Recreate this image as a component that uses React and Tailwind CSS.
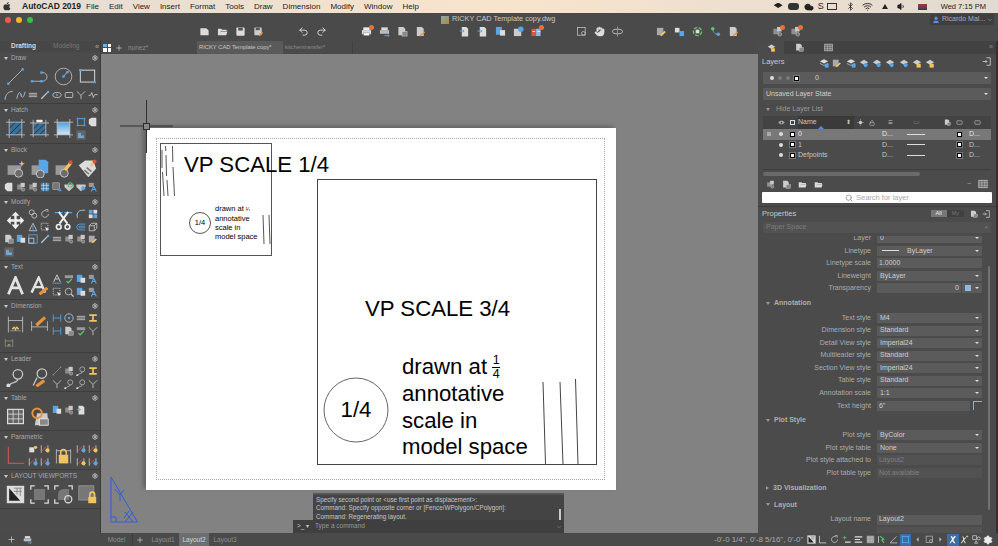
import { ChevronDown, Search, Hand, Undo2, Redo2, Plus, Settings, Wifi, Bluetooth, Cloud, Volume1, User, Lock } from "lucide-react";

const BLUE = "#58a6e8";
const ORANGE = "#e8923c";
const YELLOW = "#f2c55c";
const RED = "#e0523f";
const GREEN = "#5cc46a";
const G = "#c9c9c9";

// drawn at 24x24, the same art is used for big and small tool buttons
const art = {
  line: <><path d="M3 21 21 3" stroke={G} /><rect x="1.5" y="19.5" width="3" height="3" fill={BLUE} /><rect x="19.5" y="1.5" width="3" height="3" fill={BLUE} /></>,
  pline: <><path d="M2 18h14a5 5 0 0 0 0-11h-2" stroke={G} fill="none" /><rect x="1" y="16.5" width="3" height="3" fill={BLUE} /><rect x="13" y="16.5" width="3" height="3" fill={BLUE} /><rect x="13" y="5.5" width="3" height="3" fill={BLUE} /></>,
  circle: <><circle cx="12" cy="12" r="10.5" stroke={G} fill="none" /><path d="M12 12 17 6" stroke={G} /><rect x="10.5" y="10.5" width="3" height="3" fill={BLUE} /><rect x="15.5" y="5" width="3" height="3" fill={BLUE} /></>,
  rect: <><rect x="3" y="4" width="18" height="15" stroke={G} strokeWidth="1.4" fill="none" /><rect x="1.5" y="2.5" width="3" height="3" fill={BLUE} /><rect x="19.5" y="17.5" width="3" height="3" fill={BLUE} /></>,
  arc: <><path d="M3 21C4 10 10 4 21 3" stroke={G} strokeWidth="2" fill="none" /><rect x="1" y="19" width="4" height="4" fill={BLUE} /></>,
  spline: <><path d="M2 21C6 2 10 4 12 12s6 8 10-8" stroke={G} strokeWidth="2" fill="none" /><rect x="10" y="9" width="4" height="4" fill={BLUE} /></>,
  mline: <path d="M2 8h20M2 12h20M2 16h20" stroke={G} strokeWidth="2" />,
  pen: <><path d="M3 21 20 4" stroke={G} strokeWidth="3" /><rect x="17" y="2" width="5" height="5" fill={BLUE} /></>,
  ellipse: <><ellipse cx="12" cy="12" rx="10" ry="6" stroke={G} strokeWidth="2" fill="none" /><rect x="10" y="10" width="4" height="4" fill={BLUE} /></>,
  box: <rect x="3" y="6" width="18" height="12" rx="2" stroke={G} strokeWidth="2" fill="none" />,
  xline: <path d="M2 3 12 13 22 3M12 13v9" stroke={G} strokeWidth="2" fill="none" />,
  wave: <path d="M1 13h5l3-7 4 12 3-7h7" stroke={G} strokeWidth="2" fill="none" />,
  hatch: <><rect x="4" y="4" width="16" height="16" fill="#3d6f96" /><path d="M4 12l8-8M4 20 20 4M12 20l8-8" stroke="#222" strokeWidth="1" /><path d="M0 4h24M0 20h24M4 0v24M20 0v24" stroke={G} /></>,
  hatchEdit: <><rect x="4" y="5" width="16" height="15" fill="#3d6f96" /><path d="M4 13l8-8M4 20 20 5M12 20l8-8" stroke="#222" /><path d="M0 5h24M0 20h24M4 1v22M20 1v22" stroke={G} /><rect x="8" y="1" width="8" height="3" rx="1" fill="#eee" /></>,
  gradient: <><defs><linearGradient id="gr" x1="0" y1="0" x2="0" y2="1"><stop offset="0" stopColor="#4d9fe0" /><stop offset="1" stopColor="#d8e8f4" /></linearGradient></defs><rect x="4" y="4" width="16" height="16" fill="url(#gr)" /><path d="M0 4h24M0 20h24M4 0v24M20 0v24" stroke={G} /></>,
  boundary: <><rect x="4" y="4" width="16" height="16" stroke={BLUE} strokeWidth="2" fill="none" /><path d="M0 4h24M0 20h24M4 0v24M20 0v24" stroke={BLUE} /></>,
  tag: <path d="M2 6l6-4h12v20H8L2 16z" fill="#ddd" />,
  region: <><rect x="1" y="1" width="22" height="22" fill="#666" /><path d="M5 19V7h7v6h7v6z" fill="#6fa8d8" /></>,
  insert: <><rect x="2" y="8" width="17" height="12" fill="#9a9a9a" /><circle cx="16" cy="18" r="5" fill="#6b6b6b" stroke="#ddd" /><path d="M20 2l1 3 3 1-3 1-1 3-1-3-3-1 3-1z" fill={YELLOW} /></>,
  block: <><rect x="2" y="8" width="14" height="12" fill="#9a9a9a" /><path d="M11 1h9l3 3v14H11z" fill={BLUE} /><circle cx="13" cy="19" r="5" fill="#6b6b6b" stroke="#ddd" /></>,
  blockEdit: <><rect x="2" y="8" width="15" height="12" fill="#9a9a9a" /><circle cx="13" cy="18" r="5" fill="#6b6b6b" stroke="#ddd" /><path d="M14 14 21 5" stroke={YELLOW} strokeWidth="4" /><circle cx="21" cy="4" r="2.5" fill={RED} /></>,
  attr: <><path d="M1 8 9 2h10l4 10-10 11z" fill="#ddd" /><path d="M8 14l6 5M11 11l6 5" stroke="#777" strokeWidth="2" /><path d="M16 9l4-5" stroke={YELLOW} strokeWidth="3" /><circle cx="21" cy="3" r="2.5" fill={RED} /></>,
  sheet: <><rect x="3" y="6" width="12" height="12" fill="#8f8f8f" /><rect x="11" y="2" width="10" height="10" fill="#c8c8c8" /><circle cx="17" cy="18" r="4" fill="#777" stroke="#ddd" /></>,
  grid: <><rect x="2" y="2" width="20" height="20" fill="#3e7fb4" /><path d="M8 2v20M16 2v20M2 8h20M2 16h20" stroke="#e6e6e6" strokeWidth="1.5" /></>,
  boxArrow: <><rect x="2" y="2" width="16" height="16" fill="#777" stroke="#ddd" /><path d="M14 20h8M19 16l3 4-3 3" stroke={BLUE} strokeWidth="2" fill="none" /></>,
  shieldG: <><path d="M1 6h22v6l-11 10L1 12z" fill="#ccc" /><circle cx="15" cy="7" r="5" fill="none" stroke={GREEN} strokeWidth="2.5" /></>,
  shieldB: <><path d="M1 6h22v6l-11 10L1 12z" fill="#ccc" /><circle cx="17" cy="15" r="5" fill={BLUE} /></>,
  blockA: <><rect x="2" y="2" width="12" height="10" fill="#999" /><path d="M8 23l6-13 6 13M11 18h6" stroke={BLUE} strokeWidth="2.5" fill="none" /></>,
  move: <path d="M12 1l5 5h-3.5v4.5H18V7l5 5-5 5v-3.5h-4.5V17H17l-5 6-5-6h3.5v-3.5H6V17l-5-5 5-5v3.5h4.5V6H7z" fill="#eee" />,
  copy: <><circle cx="9" cy="8" r="6" stroke={G} strokeWidth="2" fill="none" /><circle cx="15" cy="16" r="6" stroke={G} strokeWidth="2" fill="none" /></>,
  rotate: <><path d="M20 12a8 8 0 1 1-4-7" stroke={G} strokeWidth="2" fill="none" /><path d="M13 1h6v6" stroke={G} strokeWidth="2" fill="none" /></>,
  mirror: <><path d="M12 3 3 21h18z" stroke={G} strokeWidth="2" fill="none" /><path d="M12 9v12" stroke={BLUE} strokeWidth="2" /></>,
  stretch: <><path d="M3 3h16v16H3z" stroke={G} strokeWidth="2" strokeDasharray="3 2" fill="none" /><path d="M12 12l10 5-4 2-1 4z" fill="#eee" /></>,
  trim: <><path d="M1 2h22" stroke={BLUE} strokeDasharray="4 2" strokeWidth="1.4" /><path d="M6 1l11 15M18 1 7 16" stroke="#eee" strokeWidth="2.5" /><circle cx="6" cy="20" r="3" stroke="#eee" strokeWidth="2" fill="none" /><circle cx="17" cy="20" r="3" stroke="#eee" strokeWidth="2" fill="none" /></>,
  fillet: <><path d="M3 22V14A11 11 0 0 1 14 3h8" stroke={G} strokeWidth="2" fill="none" /><rect x="1" y="12" width="4" height="4" fill={BLUE} /></>,
  array: <><rect x="2" y="2" width="9" height="9" fill={BLUE} /><rect x="13" y="2" width="9" height="9" fill="#ddd" /><rect x="2" y="13" width="9" height="9" fill="#ddd" /><rect x="13" y="13" width="9" height="9" fill={BLUE} /></>,
  offset: <path d="M22 5H9a7 7 0 0 0 0 14h13M22 10H9a2 2 0 0 0 0 4h13" stroke={BLUE} strokeWidth="2" fill="none" />,
  cube: <path d="M3 9h12v12H3zM3 9l6-6h12v12l-6 6M15 9l6-6" stroke={G} strokeWidth="2" fill="none" />,
  scale: <><rect x="2" y="2" width="20" height="20" stroke={BLUE} strokeWidth="2" fill="none" /><rect x="2" y="10" width="12" height="12" stroke={G} strokeWidth="2" fill="none" /></>,
  textA: <path d="M3 23 12 2l9 21M7 15h10" stroke="#e3e3e3" strokeWidth="3.5" fill="none" />,
  textPen: <><path d="M2 21 11 2l8 19M6 14h10" stroke="#e3e3e3" strokeWidth="3" fill="none" /><path d="M12 23l10-8" stroke={ORANGE} strokeWidth="4" /></>,
  smallA: <><path d="M4 19 12 2l8 17M8 12h8" stroke={G} strokeWidth="2.4" fill="none" /><path d="M1 22h22" stroke={BLUE} strokeWidth="2" /></>,
  abc: <><path d="M2 3h20v7H2z" fill="#999" /><path d="M6 17l4 4 9-9" stroke={GREEN} strokeWidth="3" fill="none" /></>,
  notes: <><rect x="2" y="2" width="13" height="17" fill={BLUE} /><rect x="11" y="9" width="11" height="12" fill="#ddd" /></>,
  find: <><circle cx="11" cy="11" r="8" stroke={G} strokeWidth="2" fill="none" /><path d="M17 17l6 6" stroke={G} strokeWidth="3" /></>,
  dimBig: <><path d="M3 2v20M21 2v20M3 7h18" stroke={G} /><path d="M8 18l3-3M16 18l-3-3M12 20v-4" stroke={YELLOW} strokeWidth="2" /><path d="M5 20h14" stroke="#999" /></>,
  dimPen: <><path d="M2 8v12M22 8v12M2 15h20" stroke={G} /><path d="M8 13l11-10" stroke={ORANGE} strokeWidth="4" /></>,
  dimS: <path d="M3 3v18M21 3v18M3 12h18" stroke={BLUE} strokeWidth="2" fill="none" />,
  radius: <><circle cx="12" cy="12" r="10" stroke={G} strokeWidth="2" fill="none" /><circle cx="12" cy="12" r="3" fill={BLUE} /></>,
  ibeam: <path d="M3 3h18v4h-7v10h7v4H3v-4h7V7H3z" fill={YELLOW} />,
  leader: <><circle cx="15" cy="8" r="6" stroke={G} strokeWidth="1.6" fill="none" /><path d="M15 14C14 20 8 16 4 22" stroke={G} strokeWidth="1.6" fill="none" /><circle cx="3" cy="22" r="2.5" fill="#ddd" /></>,
  leaderPen: <><circle cx="15" cy="7" r="6" stroke={G} strokeWidth="1.6" fill="none" /><path d="M9 12 4 22" stroke={G} strokeWidth="1.6" /><path d="M8 23l10-7" stroke={ORANGE} strokeWidth="4" /></>,
  table: <><rect x="2" y="3" width="20" height="18" fill="#656565" stroke="#ddd" strokeWidth="1.5" /><path d="M2 9h20M2 15h20M9 3v18M16 3v18" stroke="#ddd" /></>,
  tableLink: <><path d="M9 8h13l1 15H6z" fill="#ccc" /><circle cx="9" cy="8" r="6" stroke={ORANGE} strokeWidth="2.5" fill="none" /><rect x="12" y="15" width="11" height="8" fill="#888" stroke="#eee" /></>,
  geoL: <path d="M3 1v21h20" stroke="#c25252" strokeWidth="1.6" fill="none" />,
  square: <><rect x="3" y="8" width="12" height="12" fill="#ddd" /><circle cx="18" cy="8" r="4" fill={YELLOW} /></>,
  barY: <><path d="M3 3v18M19 3v18" stroke={G} strokeWidth="2" /><path d="M5 16 15 6" stroke={RED} strokeWidth="2" /><circle cx="18" cy="15" r="5" fill={YELLOW} /></>,
  barB: <><path d="M3 3v18M19 3v18" stroke={G} strokeWidth="2" /><path d="M5 16 15 6" stroke={RED} strokeWidth="2" /><circle cx="18" cy="15" r="5" fill={BLUE} /></>,
  lock: <><path d="M3 4v18M21 4v18M3 6h18" stroke={G} /><rect x="6" y="11" width="12" height="11" fill={YELLOW} /><path d="M8.5 11V8a3.5 3.5 0 0 1 7 0v3" stroke={YELLOW} strokeWidth="2" fill="none" /></>,
  vpA: <><rect x="1" y="1" width="22" height="22" fill="#ddd" /><path d="M4 4v16h14z" fill="#222" /><path d="M14 4v8M18 4v10M10 8h10M10 4h10" stroke="#777" /></>,
  vpB: <><rect x="5" y="5" width="14" height="14" fill="#777" /><path d="M1 6V1h5M18 1h5v5M23 18v5h-5M6 23H1v-5" stroke="#ddd" strokeWidth="1.6" fill="none" /></>,
  vpC: <><path d="M5 19V12a7 7 0 0 1 7-7h7v14z" fill="#777" /><path d="M1 6V1h5M18 1h5v5M6 23H1v-5" stroke="#ddd" strokeWidth="1.6" fill="none" /><circle cx="18" cy="18" r="4.5" stroke="#ddd" strokeWidth="1.6" fill="none" /></>,
  vpD: <><rect x="1" y="1" width="19" height="18" fill="#777" stroke="#999" /><rect x="13" y="15" width="10" height="8" fill={YELLOW} /><path d="M15 15v-3a3 3 0 0 1 6 0v3" stroke={YELLOW} strokeWidth="2" fill="none" /></>,
  file: <path d="M3 5h13l5 5v10H3z" fill="#ddd" />,
  folder: <path d="M2 6h7l2 2h10v3H8l-3 9H2zM8 12h15l-3 8H5z" fill="#ddd" />,
  save: <><rect x="3" y="3" width="18" height="18" rx="2" fill="#ddd" /><rect x="7" y="4" width="10" height="6" fill="#555" /></>,
  saveAs: <><rect x="3" y="3" width="16" height="17" rx="2" fill="#ccc" /><rect x="6" y="4" width="9" height="5" fill="#555" /><path d="M13 21l8-7" stroke={ORANGE} strokeWidth="3" /></>,
  plot: <><rect x="5" y="3" width="14" height="6" fill="#eee" /><rect x="2" y="9" width="20" height="9" fill="#ddd" /><rect x="6" y="15" width="12" height="6" fill="#fff" stroke="#777" /></>,
  plotB: <><rect x="5" y="3" width="14" height="6" fill="#ddd" /><rect x="2" y="9" width="20" height="8" fill="#bbb" /><path d="M12 21h10M19 18l3 3-3 3" stroke={BLUE} strokeWidth="2" fill="none" /></>,
  doc: <><path d="M3 2h11l4 4v14H3z" fill="#ccc" /><rect x="11" y="12" width="11" height="10" fill="#888" stroke="#ddd" /></>,
  docPen: <><path d="M4 2h11l4 4v16H4z" fill="#ccc" /><path d="M11 22l10-9" stroke={ORANGE} strokeWidth="3" /></>,
  docBlue: <><path d="M6 2h10l4 4v17H6z" fill="#ddd" /><path d="M1 11h10M8 8l3 3-3 3" stroke={BLUE} strokeWidth="2" fill="none" /></>,
  saveBlue: <><rect x="2" y="6" width="16" height="16" fill="#ccc" /><circle cx="17" cy="7" r="6" fill={BLUE} /></>,
  cards: <><rect x="1" y="6" width="10" height="16" fill={RED} /><rect x="11" y="6" width="10" height="16" fill="#8fb9dd" /><path d="M3 12h6M14 12h6" stroke="#eee" strokeWidth="2" /></>,
  zoomWin: <><rect x="3" y="3" width="17" height="17" stroke={G} strokeWidth="1.6" fill="none" /><circle cx="16" cy="16" r="4" stroke={G} strokeWidth="1.6" fill="none" /></>,
  orbit: <><ellipse cx="12" cy="12" rx="11" ry="5" stroke={G} strokeWidth="2" fill="none" /><path d="M12 1v22" stroke={BLUE} strokeWidth="2" /></>,
  layerEdit: <><path d="M2 4h14v16H2z" fill="#aaa" /><path d="M10 21l10-9" stroke={YELLOW} strokeWidth="4" /></>,
  pins: <><rect x="2" y="4" width="10" height="10" fill="#ddd" /><rect x="12" y="11" width="10" height="11" fill={BLUE} /></>,
  recycle: <><circle cx="12" cy="12" r="9" stroke={GREEN} strokeWidth="3" strokeDasharray="8 3" fill="none" /><rect x="8" y="8" width="8" height="8" fill="#ddd" /></>,
  dots: <><circle cx="6" cy="6" r="4" fill={GREEN} /><path d="M6 8c3 9 5 9 10 10" stroke="#ccc" fill="none" /><circle cx="18" cy="18" r="4" fill={BLUE} /></>,
  stack: <><path d="M2 8 12 3l10 5-10 5z" fill="#ddd" /><path d="M2 13l10 5 10-5" stroke="#bbb" strokeWidth="2" fill="none" /><rect x="14" y="14" width="9" height="9" fill={BLUE} /></>,
  layerTop: <><path d="M2 10 12 4l10 6-10 6z" fill="#ccc" /><circle cx="16" cy="17" r="5" fill={BLUE} /></>,
  layerLock: <><path d="M2 10 12 4l10 6-10 6z" fill="#ccc" /><rect x="11" y="14" width="10" height="9" fill={YELLOW} /></>,
  exit: <><path d="M12 2h10v20H12" stroke="#ddd" strokeWidth="2" fill="none" /><path d="M2 12h11M9 8l4 4-4 4" stroke="#ddd" strokeWidth="2" fill="none" /></>,
  sun: <><circle cx="12" cy="12" r="6" fill={G} /><path d="M12 1v4M12 19v4M1 12h4M19 12h4" stroke={G} strokeWidth="2" /></>,
  eye: <><path d="M1 12c6-8 16-8 22 0-6 8-16 8-22 0z" fill="#aaa" /><circle cx="12" cy="12" r="3" fill="#444" /></>,
  ortho: <path d="M4 2v19h18" stroke="#ddd" strokeWidth="2" fill="none" />,
  snapPlus: <><path d="M7 2v10M2 7h10" stroke={GREEN} strokeWidth="2" /><path d="M8 19h15" stroke="#eee" strokeWidth="3" /></>,
  list: <path d="M2 5h20M2 12h14M2 19h20" stroke="#ddd" strokeWidth="3" />,
  checker: <><rect x="2" y="2" width="20" height="20" fill="#999" /><path d="M2 6h20M2 10h20M2 14h20M2 18h20M6 2v20M10 2v20M14 2v20M18 2v20" stroke="#ddd" strokeDasharray="2 2" /></>,
  figure: <><path d="M4 3v18" stroke="#ddd" strokeWidth="2" /><path d="M8 3l10 8-5 2 6 8" stroke={GREEN} strokeWidth="3" fill="none" /></>,
  angle: <path d="M3 21 20 4M3 21h19" stroke="#ccc" strokeWidth="2" fill="none" />,
  chevL: <path d="M15 6l-6 6 6 6z" fill="#bbb" />,
  chevR: <path d="M9 6l6 6-6 6z" fill="#bbb" />,
  manWhite: <path d="M4 22 11 11 7 3h4l2 5 5-6 3 2-7 9 6 9h-4l-5-6-4 6z" fill="#fff" />,
  manSpark: <><path d="M2 22 9 11 6 4h3l2 5 3-3 2 2-5 6 5 8h-3l-4-6-4 6z" fill="#ddd" /><path d="M19 1v6M16 4h6" stroke={YELLOW} strokeWidth="2" /></>,
  shapes: <><rect x="2" y="2" width="10" height="10" stroke="#ccc" strokeWidth="2" fill="none" /><circle cx="18" cy="9" r="4" stroke="#ccc" strokeWidth="2" fill="none" /><path d="M7 22l4-7 4 7z" stroke="#ccc" strokeWidth="2" fill="none" /></>,
};

const Ic = ({ n, s = 11 }) => (
  <svg viewBox="0 0 24 24" width={s} height={s} className="shrink-0">{art[n]}</svg>
);

const Dot = ({ cn = "bg-[#ddd]" }) => <span className={`block h-[4px] w-[4px] rounded-full ${cn}`} />;
const Swatch = () => <span className="block h-[5px] w-[5px] border border-black bg-white outline outline-1 outline-[#777]" />;

const tools = [
  { name: "Draw", h: "h-[52px]", items: ["B:line", "B:pline", "B:circle", "B:rect", "arc", "spline", "mline", "pen", "ellipse", "box", "xline", "wave"] },
  { name: "Hatch", h: "h-[40px]", items: ["B:hatch", "B:hatchEdit", "B:gradient", "boundary", "tag", "region"] },
  { name: "Block", h: "h-[52px]", items: ["B:insert", "B:block", "B:blockEdit", "B:attr", "tag", "sheet", "sheet", "grid", "boxArrow", "shieldG", "shieldB", "blockA"] },
  { name: "Modify", h: "h-[65px]", items: ["B:move", "copy", "rotate", "B:trim", "fillet", "array", "mirror", "stretch", "offset", "cube", "doc", "notes", "scale", "pen", "mline", "sheet", "sheet", "layerEdit", "region"] },
  { name: "Text", h: "h-[39px]", items: ["B:textA", "B:textPen", "smallA", "abc", "notes", "blockA", "stretch", "find", "notes", "blockA"] },
  { name: "Dimension", h: "h-[53px]", items: ["B:dimBig", "B:dimPen", "dimS", "radius", "mline", "ibeam", "dimS", "doc", "abc", "xline", "dimBig"] },
  { name: "Leader", h: "h-[39px]", items: ["B:leader", "B:leaderPen", "line", "sheet", "leader", "ibeam", "xline", "leader", "leader", "xline"] },
  { name: "Table", h: "h-[39px]", items: ["B:table", "B:tableLink", "notes", "sheet", "docBlue"] },
  { name: "Parametric", h: "h-[39px]", items: ["B:geoL", "square", "barY", "B:lock", "barB", "barY", "barB", "barB", "barY", "barB"] },
  { name: "LAYOUT VIEWPORTS", h: "h-[39px]", items: ["B:vpA", "B:vpB", "B:vpC", "B:vpD"] },
];

const ToolSection = ({ section }) => (
  <section className={`${section.h} shrink-0 overflow-hidden border-b border-[#3d3d3d]`}>
    <div className="flex h-[12px] items-center pl-[4px] pr-[2px]">
      <span className="mr-[3px] h-0 w-0 border-x-[2.5px] border-t-[3px] border-x-transparent border-t-[#ccc]" />
      <span className="flex-1 text-[6.5px] leading-none text-[#a9a9a9]">{section.name}</span>
      <Settings size={6} className="text-[#bbb]" strokeWidth={4} />
    </div>
    <div className="grid grid-cols-[repeat(8,12px)] grid-flow-row-dense auto-rows-[12.5px] pl-[3px]">
      {section.items.map((it, i) =>
        it.startsWith("B:") ? (
          <span key={i} className="col-span-2 row-span-2 flex items-center justify-center">
            <Ic n={it.slice(2)} s={19} />
          </span>
        ) : (
          <span key={i} className="flex items-center justify-center">
            <Ic n={it} s={10} />
          </span>
        )
      )}
    </div>
  </section>
);

const LeftPanel = () => (
  <aside className="flex w-[101px] shrink-0 flex-col border-r border-[#3a3a3a] bg-[#4b4b4b]">
    <div className="flex h-[11px] shrink-0 items-center bg-[#474747] text-[6.5px] leading-none">
      <span className="ml-[11px] w-[42px] font-bold text-[#d8d8d8]">Drafting</span>
      <span className="w-[42px] text-[#777]">Modeling</span>
      <span className="text-[7.5px] text-[#aaa]">«</span>
    </div>
    {tools.map((section) => (
      <ToolSection key={section.name} section={section} />
    ))}
  </aside>
);

const menus = ["File", "Edit", "View", "Insert", "Format", "Tools", "Draw", "Dimension", "Modify", "Window", "Help"];

const MenuBar = () => (
  <div className="flex h-[13px] shrink-0 items-center bg-gradient-to-r from-[#e4dcd2] via-[#f8e4cc] to-[#e2dbd1] text-[8px] leading-none text-[#222]">
    <svg viewBox="0 0 24 24" width="9" height="9" className="ml-[3px]" fill="#333">
      <path d="M17 12.5c0-3 2.4-4.3 2.5-4.4-1.4-2-3.5-2.3-4.2-2.3-1.8-.2-3.5 1-4.4 1s-2.3-1-3.8-1C4.2 5.9 1 8.4 1 13.3c0 1.5.3 3 .8 4.4C2.6 19.8 5 22 6.7 22c1.6 0 2.2-1 4.1-1s2.5 1 4.1 1c1.7 0 3.8-2.5 4.7-5-2.3-1-2.6-3.6-2.6-4.5zM14 4c.8-1 1.4-2.3 1.2-3.7-1.2 0-2.6.8-3.5 1.8-.7.9-1.4 2.2-1.2 3.5 1.3.1 2.7-.7 3.5-1.6z" />
    </svg>
    <span className="ml-[10px] w-[64px] text-[8.5px] font-bold">AutoCAD 2019</span>
    <div className="flex gap-[10px]">
      {menus.map((m) => <span key={m}>{m}</span>)}
    </div>
    <div className="ml-auto flex items-center text-[#222]">
      <span className="mr-[5px] h-[8px] w-[9px] bg-[#222] [clip-path:polygon(50%_0,100%_35%,50%_70%,0_35%)]" />
      <span className="mr-[5px] h-[7px] w-[11px] rounded-[3px] bg-[#333]" />
      <Cloud size={10} fill="#222" className="mr-[4px]" />
      <span className="mr-[3px] text-[9px]">S</span>
      <span className="mr-[9px] h-[7px] w-[10px] border border-[#333]" />
      <Bluetooth size={9} className="mr-[7px]" />
      <Wifi size={11} className="mr-[9px]" />
      <span className="mr-[9px] h-0 w-0 border-x-[3px] border-b-[5px] border-x-transparent border-b-[#222]" />
      <Volume1 size={9} fill="#222" className="mr-[12px]" />
      <span className="mr-[14px] h-[6px] w-[9px] bg-gradient-to-b from-[#a33] to-[#336]" />
      <span className="mr-[12px] text-[7.5px]">Wed 7:15 PM</span>
    </div>
  </div>
);

const Tb = ({ n, badge }) => (
  <span className="relative flex h-[12px] w-[18px] items-center justify-center">
    <Ic n={n} s={11} />
    {badge && <span className="absolute right-[1px] top-[-1px] h-[5px] w-[5px] rounded-full bg-[#e8703c]" />}
  </span>
);

const TitleBar = () => (
  <div className="relative h-[28px] shrink-0 bg-[#4a4a4a]">
    <div className="flex h-[13px] items-center">
      <div className="ml-[5px] flex gap-[5px]">
        <span className="h-[6px] w-[6px] rounded-full bg-[#f05a50]" />
        <span className="h-[6px] w-[6px] rounded-full bg-[#f5b52e]" />
        <span className="h-[6px] w-[6px] rounded-full bg-[#2fc245]" />
      </div>
      <div className="ml-[408px] flex items-center gap-[3px] text-[7.3px] text-[#c9c9c9]">
        <span className="h-[8px] w-[8px] bg-gradient-to-br from-[#8aa] to-[#a83]" />
        RICKY CAD Template copy.dwg
      </div>
      <div className="ml-auto mr-[4px] flex h-[11px] w-[64px] items-center gap-[2px] rounded-[1px] bg-[#3f3f3f] pl-[2px] text-[7px] text-[#aab]">
        <User size={8} className="text-[#5b8fe0]" fill="#5b8fe0" />
        Ricardo Mal...
        <ChevronDown size={6} />
      </div>
    </div>
    <div className="-mt-[1px] flex h-[13px] items-center pl-[195px]">
      <Tb n="file" /><Tb n="folder" /><Tb n="save" /><Tb n="saveAs" />
      <span className="ml-[27px] flex w-[36px] justify-around text-[#ddd]"><Undo2 size={11} /><Redo2 size={11} /></span>
      <span className="ml-[27px] flex">
        <Tb n="plot" badge /><Tb n="plotB" /><Tb n="doc" /><Tb n="docPen" />
      </span>
      <span className="ml-[26px] flex">
        <Tb n="docBlue" /><Tb n="docBlue" /><Tb n="notes" /><Tb n="saveBlue" /><Tb n="cards" badge />
      </span>
      <span className="ml-[27px] flex items-center">
        <Tb n="zoomWin" />
        <span className="flex w-[18px] justify-center text-[#ddd]"><Hand size={11} fill="#ddd" strokeWidth={1} /></span>
        <Tb n="orbit" />
      </span>
      <span className="ml-[26px] flex">
        <Tb n="layerEdit" /><Tb n="pins" /><Tb n="recycle" /><Tb n="dots" /><Tb n="docPen" />
      </span>
      <span className="ml-[26px] flex">
        <Tb n="sheet" badge /><Tb n="sheet" badge />
      </span>
    </div>
  </div>
);

const DocTabs = () => (
  <div className="flex h-[13px] shrink-0 items-stretch bg-[#4a4a4a] text-[5.8px] text-[#8c8c8c]">
    <span className="flex w-[10px] items-center justify-end">
      <span className="grid h-[8px] w-[8px] grid-cols-2 gap-[1px]">
        <span className="bg-[#6bb2ea]" /><span className="bg-white" /><span className="bg-white" /><span className="bg-white" />
      </span>
    </span>
    <span className="flex w-[16px] items-center justify-center text-[#ccc]"><Plus size={8} /></span>
    <span className="flex w-[70px] items-center pl-[1px] text-[6.5px]">nunez*</span>
    <span className="flex w-[86px] items-center bg-[#5a5a5a] pl-[2px] text-[#c8c8c8]">RICKY CAD Template copy*</span>
    <span className="flex w-[70px] items-center border-r border-[#3f3f3f] pl-[2px]">kitchentransfer*</span>
  </div>
);

const ink = "font-['Liberation_Sans',Arial,sans-serif] text-black";

const Paper = () => (
  <div className={`absolute left-[45px] top-[74px] h-[362px] w-[470px] bg-white shadow-[-3px_-2px_4px_rgba(0,0,0,0.25)] ${ink}`}>
    <div className="absolute left-[10px] top-[10px] h-[342px] w-[449px] border border-dotted border-[#aaa]" />
    {/* small viewport */}
    <div className="absolute left-[14px] top-[15px] h-[113px] w-[112px] border border-[#555]">
      <svg className="absolute left-0 top-0" width="110" height="111" stroke="#555" fill="none">
        <path d="M1 6 L1 24" />
        <path d="M1.5 28 L3 52" />
        <path d="M4.5 2 L4.8 7 M5 11 L5.5 32 M6 36 L7 52" />
        <path d="M11.5 2 L11.8 18 M12 23 L13.5 52" />
        <path d="M102 71 L103 100" />
        <path d="M108 71 L109 100" />
        <circle cx="39" cy="79" r="10.5" />
      </svg>
      <span className="absolute left-[23px] top-[74px] w-[32px] text-center text-[7.5px] leading-[10px]">1/4</span>
      <div className="absolute left-[54px] top-[60px] whitespace-nowrap text-[7.5px] leading-[9px]">
        <div>drawn at <span className="text-[5px]">¼</span></div>
        <div>annotative</div>
        <div>scale in</div>
        <div>model space</div>
      </div>
    </div>
    <span className="absolute left-[38px] top-[23px] whitespace-nowrap text-[22.2px] leading-[28px]">VP SCALE 1/4</span>
    {/* large viewport */}
    <div className="absolute left-[171px] top-[51px] h-[286px] w-[280px] border border-[#444]">
      <svg className="absolute left-0 top-0" width="278" height="284" stroke="#444" fill="none">
        <path d="M225 202 L227.5 284" />
        <path d="M242 202 L245 284" />
        <path d="M257.5 199 L260 284" />
        <circle cx="38" cy="230" r="32" stroke="#666" />
      </svg>
      <span className="absolute left-[47px] top-[115px] whitespace-nowrap text-[22.2px] leading-[28px]">VP SCALE 3/4</span>
      <span className="absolute left-[6px] top-[216px] w-[64px] text-center text-[22.2px] leading-[28px]">1/4</span>
      <div className="absolute left-[84px] top-[174px] whitespace-nowrap text-[22.2px] leading-[26.8px]">
        <div className="flex h-[26.8px] items-center">
          drawn at
          <span className="ml-[5px] flex flex-col items-center text-[12.5px] leading-[12.5px]">
            <span>1</span>
            <span className="h-px w-[8px] bg-black" />
            <span>4</span>
          </span>
        </div>
        <div>annotative</div>
        <div>scale in</div>
        <div>model space</div>
      </div>
    </div>
  </div>
);

const Crosshair = () => (
  <svg className="absolute left-[19px] top-[46px]" width="53" height="53" stroke="#2f2f2f" fill="none">
    <path d="M0 26h23M30 26h23M26.5 0v23M26.5 30v23" />
    <rect x="23.5" y="23.5" width="6" height="6" fill="#888" />
  </svg>
);

const Ucs = () => (
  <svg className="absolute left-[9px] top-[422px]" width="30" height="48" stroke="#2f5fd8" fill="none">
    <path d="M1 1V46H27.5Z" />
    <path d="M1 41H6V46" />
    <path d="M5 13 10 19 14 14M10 19v6" />
    <path d="M15 36 23 46M23 36 15 46M14 42l5-7" />
  </svg>
);

const CommandLine = () => (
  <div className="absolute bottom-0 left-[192px] flex w-[271px] flex-col items-end text-[6.3px] leading-[8.4px] text-[#c6c6c6]">
    <div className="relative h-[27px] w-[251px] border-t-[2px] border-[#555] bg-[#444] pl-[3px] pt-[1px]">
      <div>Specify second point or &lt;use first point as displacement&gt;:</div>
      <div>Command: Specify opposite corner or [Fence/WPolygon/CPolygon]:</div>
      <div>Command: Regenerating layout.</div>
      <span className="absolute right-[3px] top-[14px] h-[11px] w-[2px] bg-[#ccc]" />
    </div>
    <div className="flex h-[13px] w-full items-center bg-[#3f3f3f]">
      <span className="w-[21px] pl-[4px] text-[#ccc]">&gt;_ ▾</span>
      <span className="ml-[1px] flex-1 text-[6.5px] text-[#999]">Type a command</span>
      <ChevronDown size={6} className="mr-[2px] text-[#999]" />
    </div>
  </div>
);

const Canvas = () => (
  <main className="relative min-h-0 flex-1 overflow-hidden bg-[#828282]">
    <Paper />
    <Crosshair />
    <Ucs />
    <CommandLine />
  </main>
);

const Select = ({ children, className = "" }) => (
  <div className={`flex h-[12px] items-center rounded-[1px] bg-[#5b5b5b] px-[3px] text-[7px] text-[#cfcfcf] ${className}`}>
    <span className="flex-1 truncate">{children}</span>
    <span className="h-0 w-0 border-x-[2px] border-t-[2.5px] border-x-transparent border-t-[#ddd]" />
  </div>
);

const layerRows = [
  { name: "0", active: true },
  { name: "1" },
  { name: "Defpoints" },
];

const layerCols = "grid grid-cols-[12px_12px_11px_56px_12px_12px_25px_26px_12px_12px_12px_25px] items-center";

const LayersPanel = () => (
  <div className="h-[153px] shrink-0 border-b border-[#3d3d3d] text-[7px] text-[#c6c6c6]">
    <div className="flex h-[18px] items-center pb-[3px] pl-[4px] pr-[5px]">
      <span className="w-[57px] text-[7.5px] text-[#c9c9c9]">Layers</span>
      <span className="flex w-[116px] justify-between pt-[2px]">
        <Ic n="stack" s={10} /><Ic n="layerEdit" s={10} /><Ic n="stack" s={10} /><Ic n="layerTop" s={10} /><Ic n="layerTop" s={10} /><Ic n="layerTop" s={10} /><Ic n="layerTop" s={10} /><Ic n="layerLock" s={10} /><Ic n="layerLock" s={10} />
      </span>
      <span className="ml-auto"><Ic n="exit" s={9} /></span>
    </div>
    <div className="px-[5px]">
      <Select className="!h-[12px]">
        <span className="flex items-center gap-[4px] pl-[4px]">
          <Dot /><Dot cn="bg-[#777]" /><Dot cn="bg-[#777]" /><Swatch /><span className="ml-[12px]">0</span>
        </span>
      </Select>
      <Select className="mt-[4px]">Unsaved Layer State</Select>
      <div className="mt-[3px] flex h-[13px] items-center pl-[3px] text-[#9a9a9a]">
        <span className="mr-[6px] h-0 w-0 border-x-[2.5px] border-t-[3px] border-x-transparent border-t-[#999]" />
        Hide Layer List
      </div>
    </div>
    <div className="mx-[5px] h-[54px] border-b border-[#3d3d3d]">
      <div className={`${layerCols} h-[13px] bg-[#434343] text-[7px]`}>
        <span />
        <span className="flex justify-center"><Ic n="eye" s={7} /></span>
        <span className="flex justify-center"><span className="h-[5px] w-[5px] border border-[#ddd]" /></span>
        <span className="relative flex h-full items-center justify-between bg-[#3a3a3a] pr-[3px]">
          Name <span className="text-[6px]">⬍</span>
          <span className="absolute bottom-0 left-[20px] h-0 w-0 border-x-[3px] border-b-[3px] border-x-transparent border-b-[#4f8fe0]" />
        </span>
        <span className="flex justify-center"><Ic n="sun" s={7} /></span>
        <span className="flex justify-center"><Lock size={6} /></span>
        <span className="flex justify-center text-[8px] leading-none">≡</span>
        <span className="flex justify-center text-[#777]">▭</span>
        <span /><span className="flex justify-center"><Ic n="doc" s={7} /></span>
        <span className="flex justify-center"><Ic n="box" s={7} /></span>
        <span className="flex justify-center"><Ic n="box" s={7} /></span>
      </div>
      {layerRows.map((r) => (
        <div key={r.name} className={`${layerCols} h-[10.5px] text-[7px] ${r.active ? "bg-[#787878] text-[#e6e6e6]" : ""}`}>
          <span className="flex justify-center">{r.active && <span className="h-[4px] w-[4px] bg-[#aaa]" />}</span>
          <span className="flex justify-center"><Dot /></span>
          <span className="flex justify-center"><Swatch /></span>
          <span>{r.name}</span>
          <span /><span />
          <span className="pl-[4px]">D...</span>
          <span className="mx-[4px] h-px bg-[#ddd]" />
          <span /><span />
          <span className="flex justify-center"><Swatch /></span>
          <span className="pl-[4px]">D...</span>
        </div>
      ))}
    </div>
    <div className="mx-[5px] mt-[2px] h-[4px] w-[157px] rounded-full bg-[#6a6a6a]" />
    <div className="flex h-[16px] items-center gap-[7px] pl-[8px] pr-[8px]">
      <Ic n="sheet" s={9} /><Ic n="doc" s={9} /><Ic n="folder" s={9} /><Ic n="folder" s={9} />
      <span className="ml-auto text-[#aaa]">−</span><Ic n="table" s={10} />
    </div>
    <div className="mx-[4px] flex h-[11px] items-center justify-center gap-[3px] rounded-[1px] bg-white text-[7.5px] text-[#aaa]">
      <Search size={8} className="text-[#777]" />
      Search for layer
    </div>
  </div>
);

const Heading = ({ children, closed }) => (
  <div className="flex h-[17px] items-center pl-[8px] text-[7px] font-bold text-[#aeaeae]">
    <span className={closed
      ? "mr-[4px] h-0 w-0 border-y-[2.5px] border-l-[3px] border-y-transparent border-l-[#999]"
      : "mr-[4px] h-0 w-0 border-x-[2.5px] border-t-[3px] border-x-transparent border-t-[#999]"} />
    {children}
  </div>
);

const Row = ({ label, value, type = "select", children }) => (
  <div className="flex h-[12.55px] items-center text-[7px]">
    <span className="w-[114px] whitespace-nowrap text-right text-[#ababab]">{label}</span>
    <div className="ml-[6px] flex w-[106px] gap-[1px]">
      {type === "select" && <Select className="!h-[10px] flex-1">{children || value}</Select>}
      {type === "text" && <div className="flex h-[10px] flex-1 items-center bg-[#5b5b5b] px-[2px] text-[#cfcfcf]">{value}</div>}
      {type === "off" && <div className="flex h-[10px] flex-1 items-center bg-[#525252] px-[2px] text-[#808080]">{value}</div>}
      {type === "pick" && <><div className="flex h-[10px] flex-1 items-center bg-[#5b5b5b] px-[2px] text-[#cfcfcf]">{value}</div><span className="ml-[2px] h-[9px] w-[9px] border-l border-t border-[#7fb4e0]" /></>}
      {type === "slider" && <><div className="flex h-[10px] flex-1 items-center justify-end bg-[#5b5b5b] px-[2px] text-[#cfcfcf]">{value}</div><Select className="!h-[10px] w-[20px]"><span className="block h-[6px] w-[6px] bg-[#8fb9dd]" /></Select></>}
    </div>
  </div>
);

const PropertiesPanel = () => (
  <div className="relative min-h-0 flex-1 overflow-hidden">
    <div className="flex h-[13px] items-center pl-[4px] pr-[6px] text-[7.5px] text-[#c9c9c9]">
      Properties
      <span className="ml-auto flex h-[7px] items-center bg-[#777] px-[5px] text-[5.5px] text-[#eee]">All</span>
      <span className="flex h-[7px] items-center bg-[#404040] px-[5px] text-[5.5px] text-[#777]">My</span>
      <span className="ml-[6px]"><Ic n="doc" s={8} /></span>
      <span className="ml-[4px]"><Ic n="exit" s={8} /></span>
    </div>
    <div className="mx-[5px] mt-[2px] flex h-[11px] items-center justify-between bg-[#525252] px-[3px] text-[7px] text-[#7c7c7c]">
      Paper Space <span className="text-[5px]">▾</span>
    </div>
    <div className="mt-[3px] overflow-hidden">
      <div className="-mt-[4px] pr-[14px]">
        <Row label="Layer" value="0" />
        <Row label="Linetype">
          <span className="flex items-center"><span className="ml-[2px] mr-[8px] inline-block h-px w-[17px] bg-[#ddd] align-middle" />ByLayer</span>
        </Row>
        <Row label="Linetype scale" value="1.0000" type="text" />
        <Row label="Lineweight" value="ByLayer" />
        <Row label="Transparency" value="0" type="slider" />
        <Heading>Annotation</Heading>
        <Row label="Text style" value="M4" />
        <Row label="Dimension style" value="Standard" />
        <Row label="Detail View style" value="Imperial24" />
        <Row label="Multileader style" value="Standard" />
        <Row label="Section View style" value="Imperial24" />
        <Row label="Table style" value="Standard" />
        <Row label="Annotation scale" value="1:1" />
        <Row label="Text height" value={'6"'} type="pick" />
        <Heading>Plot Style</Heading>
        <Row label="Plot style" value="ByColor" />
        <Row label="Plot style table" value="None" />
        <Row label="Plot style attached to" value="Layout2" type="off" />
        <Row label="Plot table type" value="Not available" type="off" />
        <Heading closed>3D Visualization</Heading>
        <Heading>Layout</Heading>
        <Row label="Layout name" value="Layout2" type="text" />
        <Row label="" value="" type="off" />
      </div>
    </div>
    <span className="absolute right-[6px] top-[59px] h-[244px] w-[2px] rounded-full bg-[#727272]" />
  </div>
);

const RightPanel = () => (
  <aside className="flex w-[238px] shrink-0 flex-col bg-[#4b4b4b]">
    <div className="flex h-[13px] shrink-0 items-center bg-[#424242]">
      <span className="flex h-full w-[26px] items-center justify-center bg-[#4b4b4b]"><Ic n="layerLock" s={9} /></span>
      <span className="flex h-full w-[30px] items-center justify-center"><Ic n="doc" s={9} /></span>
      <span className="flex h-full w-[28px] items-center justify-center"><Ic n="table" s={9} /></span>
      <span className="ml-auto mr-[3px] text-[7px] text-[#888]">»</span>
    </div>
    <LayersPanel />
    <PropertiesPanel />
  </aside>
);

const statusIcons = ["vpA", "ortho", "rotate", "snapPlus", "list", "checker", "figure", "angle", "boundary", "chevL", "zoomWin", "chevR", "manWhite", "manSpark", "shapes"];

const StatusBar = () => (
  <footer className="flex h-[13px] shrink-0 items-center bg-[#4a4a4a] text-[6.5px] text-[#8e8e8e]">
    <span className="flex w-[101px] items-center pl-[7px] text-[#ccc]">
      <Plus size={9} />
      <span className="ml-[7px]"><Ic n="plotB" s={9} /></span>
    </span>
    <span className="flex h-full w-[32px] items-center justify-center border-r border-[#3d3d3d]">Model</span>
    <span className="flex h-full w-[14px] items-center justify-center text-[#ccc]"><Plus size={8} /></span>
    <span className="flex h-full w-[32px] items-center justify-center">Layout1</span>
    <span className="flex h-full w-[30px] items-center justify-center bg-[#6e6e6e] text-[#d6d6d6]">Layout2</span>
    <span className="flex h-full w-[32px] items-center justify-center">Layout3</span>
    <div className="ml-auto mr-[4px] flex items-center">
      <span className="mr-[2px] text-[7.9px] text-[#aaa]">-0'-0 1/4", 0'-8 5/16", 0'-0"</span>
      {statusIcons.map((n, i) => (
        <span key={i} className={`flex h-[12px] w-[11.8px] items-center justify-center ${n === "boundary" || n === "manWhite" ? "bg-[#3a6ea5]" : ""}`}>
          <Ic n={n} s={9} />
        </span>
      ))}
      <span className="flex h-[12px] w-[11.8px] items-center justify-center text-[#eee]"><Settings size={10} fill="#eee" /></span>
    </div>
  </footer>
);

export default function App() {
  return (
    <div className="flex h-[546px] w-[998px] flex-col overflow-hidden bg-[#4a4a4a] font-['Liberation_Sans',Arial,sans-serif]">
      <MenuBar />
      <TitleBar />
      <div className="flex min-h-0 flex-1">
        <LeftPanel />
        <div className="flex min-w-0 flex-1 flex-col">
          <DocTabs />
          <Canvas />
        </div>
        <RightPanel />
        <span className="w-[2px] shrink-0 bg-[#3a2e22]" />
      </div>
      <StatusBar />
    </div>
  );
}
